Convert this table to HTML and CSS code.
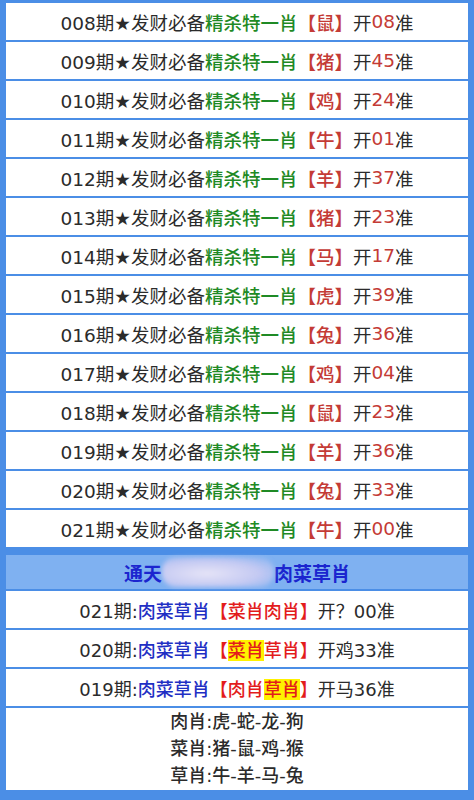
FILE: index.html
```html
<!DOCTYPE html>
<html lang="zh">
<head>
    <meta charset="UTF-8">
    <meta name="viewport" content="width=device-width, initial-scale=1.0">
    <title>精杀特一肖</title>
    <link rel="stylesheet" href="styles.css">
</head>
<body>
    <div class="page">
        <div class="list">
            <div class="row">008期★发财必备<span class="green">精杀特一肖</span><span class="red">【鼠】</span>开<span class="red">08</span>准</div>
            <div class="row">009期★发财必备<span class="green">精杀特一肖</span><span class="red">【猪】</span>开<span class="red">45</span>准</div>
            <div class="row">010期★发财必备<span class="green">精杀特一肖</span><span class="red">【鸡】</span>开<span class="red">24</span>准</div>
            <div class="row">011期★发财必备<span class="green">精杀特一肖</span><span class="red">【牛】</span>开<span class="red">01</span>准</div>
            <div class="row">012期★发财必备<span class="green">精杀特一肖</span><span class="red">【羊】</span>开<span class="red">37</span>准</div>
            <div class="row">013期★发财必备<span class="green">精杀特一肖</span><span class="red">【猪】</span>开<span class="red">23</span>准</div>
            <div class="row">014期★发财必备<span class="green">精杀特一肖</span><span class="red">【马】</span>开<span class="red">17</span>准</div>
            <div class="row">015期★发财必备<span class="green">精杀特一肖</span><span class="red">【虎】</span>开<span class="red">39</span>准</div>
            <div class="row">016期★发财必备<span class="green">精杀特一肖</span><span class="red">【兔】</span>开<span class="red">36</span>准</div>
            <div class="row">017期★发财必备<span class="green">精杀特一肖</span><span class="red">【鸡】</span>开<span class="red">04</span>准</div>
            <div class="row">018期★发财必备<span class="green">精杀特一肖</span><span class="red">【鼠】</span>开<span class="red">23</span>准</div>
            <div class="row">019期★发财必备<span class="green">精杀特一肖</span><span class="red">【羊】</span>开<span class="red">36</span>准</div>
            <div class="row">020期★发财必备<span class="green">精杀特一肖</span><span class="red">【兔】</span>开<span class="red">33</span>准</div>
            <div class="row">021期★发财必备<span class="green">精杀特一肖</span><span class="red">【牛】</span>开<span class="red">00</span>准</div>
        </div>

        <div class="list second">
            <div class="head">通天<span class="smudge"></span>肉菜草肖</div>
            <div class="row row-b">021期:<span class="blue">肉菜草肖</span><span class="hot">【菜肖肉肖】</span>开？00准</div>
            <div class="row row-b">020期:<span class="blue">肉菜草肖</span><span class="hot">【<mark>菜肖</mark>草肖】</span>开鸡33准</div>
            <div class="row row-b">019期:<span class="blue">肉菜草肖</span><span class="hot">【肉肖<mark>草肖</mark>】</span>开马36准</div>
            <div class="legend">
                <div>肉肖:虎-蛇-龙-狗</div>
                <div>菜肖:猪-鼠-鸡-猴</div>
                <div>草肖:牛-羊-马-兔</div>
            </div>
        </div>
    </div>
</body>
</html>
```

FILE: styles.css
```css
body {
    margin: 0;
    background-color: #4b8ee6;
    font-family: "DejaVu Sans", "Noto Sans CJK SC", sans-serif;
    color: #2b2b2b;
}

.page {
    padding: 3px 6px 0;
}

.list {
    display: flex;
    flex-direction: column;
    gap: 2px;
}

.row {
    height: 37px;
    background: #fff;
    display: flex;
    align-items: center;
    justify-content: center;
    font-size: 18.5px;
    white-space: nowrap;
}

    .row .green {
        color: #1f8a25;
        font-weight: 500;
    }

    .row .red {
        color: #c43b36;
        font-weight: 500;
    }

.second {
    margin-top: 8px;
}

.head {
    height: 34px;
    background: #7fb1f1;
    color: #1b25cf;
    font-size: 19px;
    font-weight: bold;
    display: flex;
    align-items: center;
    justify-content: center;
}

.smudge {
    display: inline-block;
    width: 112px;
    height: 30px;
    border-radius: 14px;
    background: radial-gradient(ellipse at 40% 55%, #e6e4f7 0%, #c4c9f2 55%, rgba(170, 185, 240, 0) 100%);
    filter: blur(2px);
}

.row-b {
    font-size: 18px;
}

    .row-b .blue {
        color: #1f2fc4;
        font-weight: 500;
    }

    .row-b .hot {
        color: #e31c1c;
        font-weight: 500;
    }

    .row-b mark {
        background: #fff200;
        color: #e31c1c;
    }

.legend {
    background: #fff;
    text-align: center;
    font-size: 18px;
    line-height: 27px;
    padding-bottom: 1px;
    font-weight: 500;
}
```
